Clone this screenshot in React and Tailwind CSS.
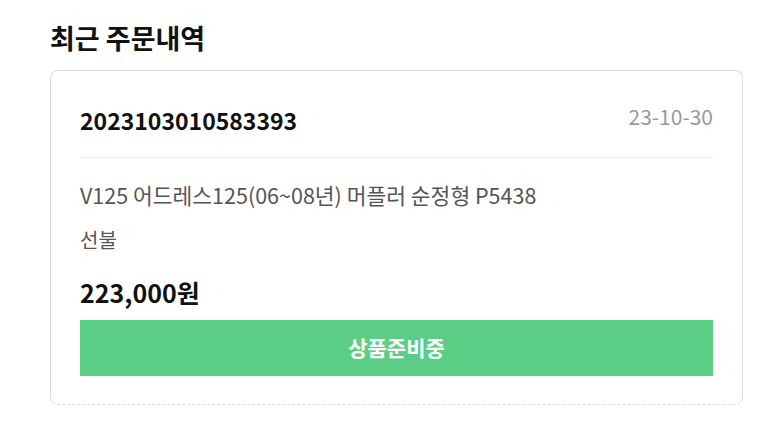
export default function App() {
  const font = { fontFamily: '"Noto Sans CJK KR", "Noto Sans", sans-serif' };
  return (
    <div className="w-[760px] h-[437px] bg-white" style={font}>
      <div className="pl-[50px] pr-[17px] pt-[20px]">
        <h2 className="text-[27px] leading-[36px] font-bold text-[#111]">최근 주문내역</h2>
        <div className="mt-[14px] rounded-[8px] border border-[#dcdcdc] [border-bottom-style:dashed] px-[29px] pt-[31px] pb-[28px]">
          <div className="flex items-start justify-between pb-[19px] border-b border-[#ececec]">
            <span className="text-[23px] leading-[36px] font-semibold text-[#111]">2023103010583393</span>
            <span className="text-[21px] leading-[28px] text-[#9a9a9a]">23-10-30</span>
          </div>
          <p className="mt-[23px] text-[21.5px] leading-[28px] text-[#555]">V125 어드레스125(06~08년) 머플러 순정형 P5438</p>
          <p className="mt-[17px] text-[20px] leading-[28px] text-[#555]">선불</p>
          <p className="mt-[20px] text-[25px] leading-[36px] font-bold text-[#111]">223,000원</p>
          <div className="mt-[10px] h-[56px] bg-[#5bce85] flex items-center justify-center">
            <span className="text-[21px] font-bold text-white">상품준비중</span>
          </div>
        </div>
      </div>
    </div>
  );
}
